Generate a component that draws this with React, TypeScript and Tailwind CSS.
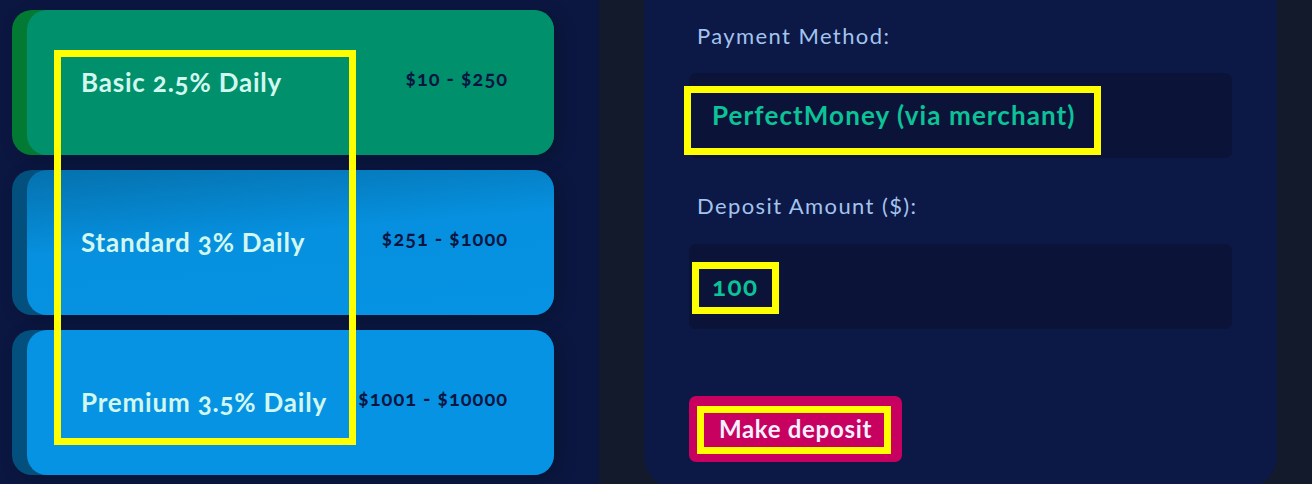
const plans = [
  {
    name: 'Basic 2.5% Daily',
    range: '$10 - $250',
    stripe: 'bg-[#037a33]',
    body: 'bg-[#00906c]',
  },
  {
    name: 'Standard 3% Daily',
    range: '$251 - $1000',
    stripe: 'bg-[#03507f]',
    body: 'bg-[linear-gradient(175deg,#0571ad_0%,#0690df_45%,#0693e3_100%)]',
  },
  {
    name: 'Premium 3.5% Daily',
    range: '$1001 - $10000',
    stripe: 'bg-[#03507f]',
    body: 'bg-[#0693e3]',
  },
];

function PlanCard({ plan }: { plan: (typeof plans)[number] }) {
  return (
    <div className={`h-[145px] w-[542px] rounded-[20px] ${plan.stripe} shadow-[6px_4px_18px_rgba(0,0,0,0.18)]`}>
      <div className={`ml-[15px] flex h-full items-center justify-between rounded-[20px] pl-[54px] pr-[46px] ${plan.body}`}>
        <span className="whitespace-nowrap text-[26px] font-bold tracking-[0.8px] text-[#d2f7ee] oldstyle-nums">
          {plan.name}
        </span>
        <span className="-mt-[10px] whitespace-nowrap text-[20px] font-bold tracking-[1px] text-[#0b1541] oldstyle-nums">
          {plan.range}
        </span>
      </div>
    </div>
  );
}

export default function App() {
  return (
    <div
      className="relative flex h-[484px] w-[1312px] overflow-hidden bg-[#0b1741]"
      style={{ fontFamily: 'Lato, "Open Sans", sans-serif' }}
    >
      {/* Plans */}
      <div className="flex w-[599px] shrink-0 flex-col gap-[15px] pl-[12px] pt-[10px]">
        {plans.map((plan) => (
          <PlanCard key={plan.name} plan={plan} />
        ))}
      </div>

      {/* Deposit form */}
      <div className="flex flex-1 bg-[#131a2b] pl-[45px] pr-[35px]">
        <div className="h-[488px] w-[633px] rounded-b-[32px] bg-[#0c1845] px-[45px]">
          <div className="pl-[8px] pt-[21px] text-[22px] font-normal leading-[30px] tracking-[1.4px] text-[#a3c4ee]">
            Payment Method:
          </div>
          <div className="mt-[22px] flex h-[85px] w-[543px] items-center rounded-[7px] bg-[#0b1339] pl-[23px]">
            <span className="text-[26px] font-bold tracking-[1.1px] text-[#0cc297]">PerfectMoney (via merchant)</span>
          </div>
          <div className="pl-[8px] pt-[33px] text-[22px] font-normal leading-[30px] tracking-[1.4px] text-[#a3c4ee]">
            Deposit Amount ($):
          </div>
          <div className="mt-[23px] flex h-[85px] w-[543px] items-center rounded-[7px] bg-[#0b1339] pl-[23px]">
            <span className="text-[26px] font-bold tracking-[1.5px] text-[#0cc297] oldstyle-nums">100</span>
          </div>
          <button className="mt-[67px] flex h-[66px] w-[213px] items-center justify-center rounded-[7px] bg-[#c80060] text-[24px] font-bold tracking-[0.7px] text-[#f4f0ff]">
            Make deposit
          </button>
        </div>
      </div>

      {/* Annotation boxes */}
      <div className="pointer-events-none absolute left-[54px] top-[50px] h-[395px] w-[302px] border-[7px] border-[#ffff00]" />
      <div className="pointer-events-none absolute left-[684px] top-[86px] h-[69px] w-[417px] border-[7px] border-[#ffff00]" />
      <div className="pointer-events-none absolute left-[692px] top-[262px] h-[52px] w-[87px] border-[7px] border-[#ffff00]" />
      <div className="pointer-events-none absolute left-[697px] top-[406px] h-[48px] w-[194px] border-[7px] border-[#ffff00]" />
    </div>
  );
}
